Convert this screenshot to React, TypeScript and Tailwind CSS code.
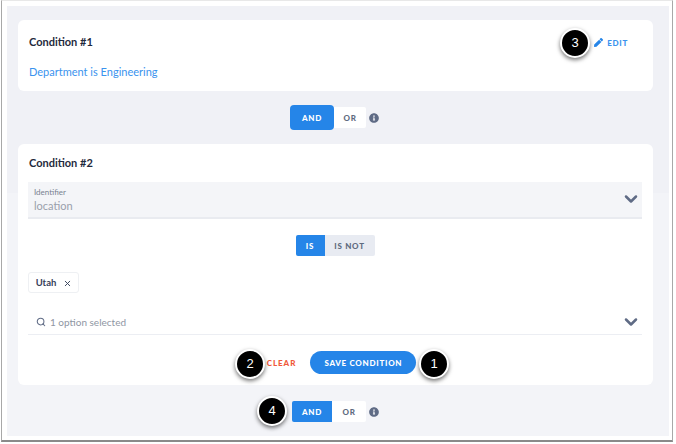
import { ChevronDown, Search, X } from "lucide-react";
import { FaInfoCircle, FaPen } from "react-icons/fa";

const Callout = ({ n, className }: { n: number; className: string }) => (
	<div
		className={`absolute flex h-[30px] w-[30px] items-center justify-center rounded-full border-2 border-white bg-black font-['Liberation_Sans',sans-serif] text-[13px] text-white shadow-[0_2px_4px_rgba(0,0,0,0.55)] ${className}`}
	>
		{n}
	</div>
);

const AndOr = ({ first }: { first: boolean }) => (
	<div className="flex items-center justify-center pr-[2px]">
		{first ? (
			<div className="flex h-[25px] w-[44px] items-center justify-center rounded-[4px] bg-[#2585e8] pt-[1px] text-[8px] font-black tracking-[0.09em] text-white">
				AND
			</div>
		) : (
			<div className="ml-[2px] flex h-[21px] w-[40px] items-center justify-center rounded-l-[2px] bg-[#2585e8] pt-[1px] text-[8px] font-black tracking-[0.09em] text-white">
				AND
			</div>
		)}
		<div
			className={`flex h-[21px] items-center justify-center rounded-r-[2px] bg-white pt-[1px] text-[8px] font-black tracking-[0.09em] text-[#5f6b80] ${first ? "w-[32px]" : "w-[34px]"}`}
		>
			OR
		</div>
		<FaInfoCircle className="ml-[3px] h-[10px] w-[10px] text-[#5f6b85]" />
	</div>
);

export default function App() {
	return (
		<div className="h-[444px] w-[676px] overflow-hidden bg-white font-['Lato',sans-serif]">
			<div className="ml-[1px] h-[442px] w-[672px] border-t border-r border-b-2 border-l border-t-[#e8e8e8] border-r-[#a8a8a8] border-b-[#8a8a8a] border-l-[#a8a8a8] px-[5px] pt-[5px]">
				<div className="relative flex h-[430px] w-[662px] flex-col bg-[linear-gradient(#f0f1f6_0,#f0f1f6_187px,#f3f4f8_187px)] pt-[14px] pl-[11px]">
					<section className="flex h-[71px] w-[635px] flex-col rounded-[6px] bg-white pt-[13px] pl-[11px]">
						<div className="flex h-[18px] items-center justify-between pr-[25px]">
							<h2 className="text-[11px] font-bold text-[#1f2a3d]">Condition #1</h2>
							<div className="mt-[1px] flex items-center gap-[4px] text-[8px] font-black tracking-[0.09em] text-[#3a93ee]">
								<FaPen className="h-[9px] w-[9px] text-[#2585e8]" />
								EDIT
							</div>
						</div>
						<p className="mt-[12px] text-[11px] leading-[18px] text-[#3a93ee]">Department is Engineering</p>
					</section>

					<div className="mt-[14px] mb-[14px] w-[635px]">
						<AndOr first />
					</div>

					<section className="flex h-[241px] w-[635px] flex-col rounded-[6px] bg-white px-[10px] pt-[10px]">
						<h2 className="h-[18px] pl-[1px] text-[11px] leading-[18px] font-bold text-[#1f2a3d]">Condition #2</h2>
						<div className="mt-[10px] flex h-[37px] w-[614px] items-center justify-between border-b-2 border-[#e9ebf0] bg-[#f4f5f8] pr-[1px] pl-[6px]">
							<div className="flex flex-col">
								<span className="text-[8px] leading-[11px] text-[#7a8291]">Identifier</span>
								<span className="text-[11px] leading-[15px] text-[#9aa0ac]">location</span>
							</div>
							<ChevronDown className="mt-[-2px] h-[20px] w-[20px] text-[#5f6b85]" strokeWidth={3} />
						</div>

						<div className="mt-[16px] flex justify-center pr-[1px]">
							<div className="flex h-[21px] w-[29px] items-center justify-center rounded-l-[2px] bg-[#2585e8] pt-[1px] text-[8px] font-black tracking-[0.09em] text-white">
								IS
							</div>
							<div className="flex h-[21px] w-[50px] items-center justify-center rounded-r-[2px] bg-[#e8ebf2] pt-[1px] text-[8px] font-black tracking-[0.09em] text-[#5f6b80]">
								IS NOT
							</div>
						</div>

						<div className="mt-[16px] flex h-[21px] w-[51px] items-center justify-center gap-[7px] rounded-[3px] border border-[#eef0f3] pt-[1px] pl-[1px] text-[9.5px] font-bold text-[#36415a]">
							Utah
							<X className="h-[9px] w-[9px]" strokeWidth={2.5} />
						</div>

						<div className="mt-[19px] flex h-[23px] w-[614px] items-center justify-between border-b border-[#eceef3] pr-[1px] pb-[2px] pl-[8px]">
							<div className="flex items-center gap-[4px] text-[10px] text-[#8f96a3]">
								<Search className="h-[10px] w-[10px] text-[#5f6b85]" strokeWidth={2.5} />1 option selected
							</div>
							<ChevronDown className="h-[20px] w-[20px] text-[#5f6b85]" strokeWidth={3} />
						</div>

						<div className="mt-[16px] flex items-center justify-center gap-[14px] pl-[12px]">
							<span className="pt-[1px] text-[8px] font-black tracking-[0.12em] text-[#f0593a]">CLEAR</span>
							<div className="flex h-[23px] w-[106px] items-center justify-center rounded-full bg-[#2585e8] pt-[1px] text-[8px] font-black tracking-[0.09em] text-white">
								SAVE CONDITION
							</div>
						</div>
					</section>

					<div className="mt-[16px] w-[635px]">
						<AndOr first={false} />
					</div>

					<Callout n={3} className="top-[22px] left-[553px]" />
					<Callout n={2} className="top-[343px] left-[228px]" />
					<Callout n={1} className="top-[343px] left-[412px]" />
					<Callout n={4} className="top-[390px] left-[250px]" />
				</div>
			</div>
		</div>
	);
}
